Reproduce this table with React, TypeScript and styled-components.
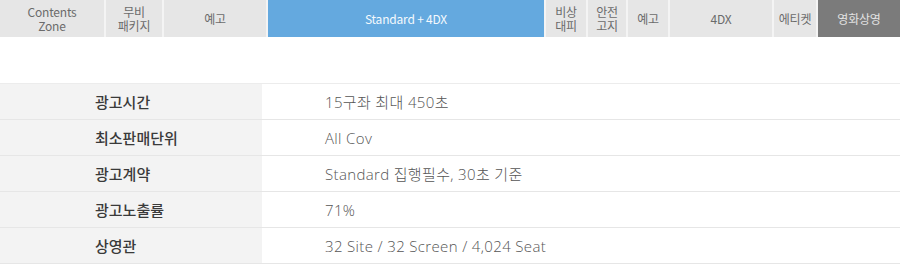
import React from "react";
import styled, { createGlobalStyle } from "styled-components";

const Global = createGlobalStyle`
  html, body { margin: 0; padding: 0; background: #fff; }
  body { font-family: "Noto Sans CJK KR", "Noto Sans", sans-serif; }
`;

const Page = styled.div`
  width: 900px;
  height: 265px;
  overflow: hidden;
  background: #fff;
`;

const TabBar = styled.div`
  display: flex;
  gap: 2px;
  height: 37px;
  background: #f4f4f4;
`;

type TabKind = "normal" | "active" | "dark";

const Tab = styled.div<{ $w?: number; $kind: TabKind }>`
  ${(p) => (p.$w ? `width: ${p.$w}px; flex: none;` : "flex: 1;")}
  display: flex;
  align-items: center;
  justify-content: center;
  text-align: center;
  font-size: 12px;
  line-height: 14px;
  letter-spacing: -0.2px;
  white-space: pre-line;
  background: ${(p) =>
    p.$kind === "active" ? "#64a9df" : p.$kind === "dark" ? "#7b7b7b" : "#e6e6e6"};
  color: ${(p) =>
    p.$kind === "active" ? "#f4f9fd" : p.$kind === "dark" ? "#e2e2e2" : "#6b6b6b"};
`;

const Table = styled.div`
  margin-top: 46px;
  border-top: 1px solid #ececec;
`;

const Row = styled.div`
  display: flex;
  height: 35px;
  border-bottom: 1px solid #e6e6e6;
`;

const Label = styled.div`
  width: 262px;
  flex: none;
  box-sizing: border-box;
  padding-left: 95px;
  background: #f3f3f3;
  display: flex;
  align-items: center;
  font-size: 15px;
  font-weight: 500;
  color: #3a3a3a;
`;

const Value = styled.div`
  flex: 1;
  padding-left: 63px;
  display: flex;
  align-items: center;
  font-family: "Open Sans", "Noto Sans CJK KR", sans-serif;
  font-size: 15px;
  font-weight: 300;
  color: #555;
  letter-spacing: 0.35px;
`;

const tabs: { label: string; w?: number; kind: TabKind }[] = [
  { label: "Contents\nZone", w: 104, kind: "normal" },
  { label: "무비\n패키지", w: 56, kind: "normal" },
  { label: "예고", w: 102, kind: "normal" },
  { label: "Standard + 4DX", w: 276, kind: "active" },
  { label: "비상\n대피", w: 40, kind: "normal" },
  { label: "안전\n고지", w: 38, kind: "normal" },
  { label: "예고", w: 40, kind: "normal" },
  { label: "4DX", w: 102, kind: "normal" },
  { label: "에티켓", w: 42, kind: "normal" },
  { label: "영화상영", kind: "dark" },
];

const rows: [string, string][] = [
  ["광고시간", "15구좌 최대 450초"],
  ["최소판매단위", "All Cov"],
  ["광고계약", "Standard 집행필수, 30초 기준"],
  ["광고노출률", "71%"],
  ["상영관", "32 Site / 32 Screen / 4,024 Seat"],
];

export default function App() {
  return (
    <Page>
      <Global />
      <TabBar>
        {tabs.map((t, i) => (
          <Tab key={i} $w={t.w} $kind={t.kind}>
            {t.label}
          </Tab>
        ))}
      </TabBar>
      <Table>
        {rows.map(([l, v]) => (
          <Row key={l}>
            <Label>{l}</Label>
            <Value>{v}</Value>
          </Row>
        ))}
      </Table>
    </Page>
  );
}
